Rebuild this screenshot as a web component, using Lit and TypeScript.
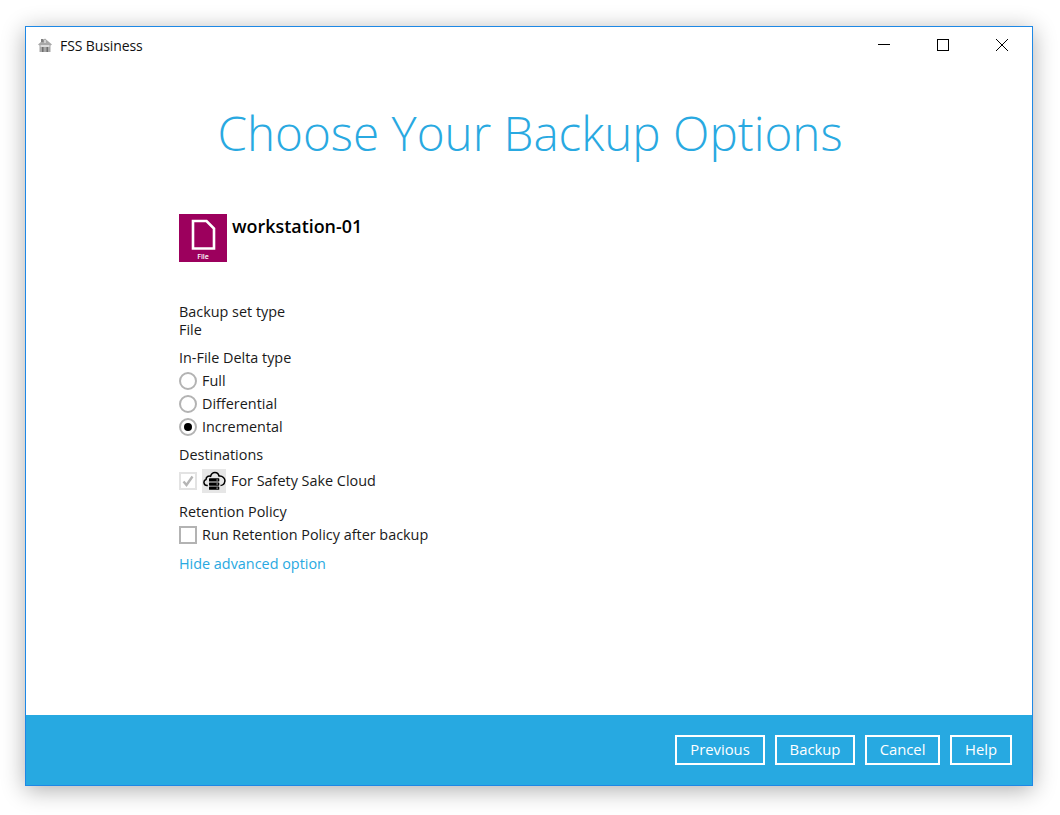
import { LitElement, html, css } from "lit";
import { customElement } from "lit/decorators.js";

@customElement("app-root")
export class AppRoot extends LitElement {
  static styles = css`
    :host { display: block; width: 1060px; height: 815px; background: #fff; font-family: "Open Sans", sans-serif; font-size: 14.4px; color: #1a1a1a; overflow: hidden; }
    .page { box-sizing: border-box; width: 1060px; height: 815px; padding: 26px 27px 29px 25px; }
    .win { box-sizing: border-box; height: 100%; border: 1px solid #1e88e5; background: #fff; display: flex; flex-direction: column; box-shadow: 0 4px 22px rgba(0,0,0,.32); }
    .titlebar { height: 36px; display: flex; align-items: center; padding-left: 11px; padding-right: 1px; flex: none; }
    .appicon { width: 16px; height: 16px; margin-right: 7px; }
    .apptitle { font-size: 14px; color: #111; letter-spacing: -0.1px; }
    .controls { margin-left: auto; display: flex; }
    .ctl { width: 59px; height: 36px; display: flex; align-items: center; justify-content: center; }
    .main { flex: 1; min-height: 0; padding-left: 153px; }
    h1 { margin: 37px 0 0 -151px; font-weight: 300; font-size: 47.6px; line-height: 66px; color: #29a9e1; text-align: center; }
    .head { display: flex; margin-top: 48px; gap: 5px; }
    .tile { width: 48px; height: 48px; background: #9c005d; display: block; }
    .name { font-size: 17.9px; font-weight: 600; line-height: 24px; color: #000; }
    .lbl { line-height: 18px; }
    .type { margin-top: 41px; }
    .sect { margin-top: 10px; }
    .sect.tight { margin-top: 8px; }
    .row { display: flex; align-items: center; height: 23px; gap: 5px; }
    .group { margin-top: 2px; }
    .row.dest { height: 25px; margin-top: 4px; }
    .radio { box-sizing: border-box; width: 18px; height: 18px; border: 2px solid #b3b3b3; border-radius: 50%; display: flex; align-items: center; justify-content: center; }
    .dot { width: 8px; height: 8px; border-radius: 50%; background: #000; }
    .check { box-sizing: border-box; width: 18px; height: 18px; border: 2px solid #b3b3b3; display: flex; align-items: center; justify-content: center; }
    .check.off { border-color: #e3e3e3; }
    .cloud { width: 24px; height: 24px; background: #e6e6e6; display: block; }
    .link { color: #29a9e1; margin-top: 9px; line-height: 18px; }
    .foot { flex: none; height: 70px; background: #27a9e1; display: flex; align-items: center; justify-content: flex-end; gap: 10px; padding-right: 20px; }
    .btn { box-sizing: border-box; height: 30px; border: 2px solid #fff; color: #fff; display: flex; align-items: center; justify-content: center; font-size: 14.8px; line-height: 24px; padding: 0 0 2px; font-family: "Open Sans", sans-serif; background: transparent; }
  `;

  render() {
    return html`<div class="page"><div class="win">
      <div class="titlebar">
        <svg class="appicon" viewBox="0 0 16 16">
          <path d="M8 1.500 L15 7.500 L13.500 8.500 V15 H2.500 V8.500 L1 7.500 Z" fill="#a8a8a8"/>
          <path d="M4 2 h2.500 v3 h-2.500z" fill="#808080"/>
          <path d="M7 3 h2 v3 h-2z" fill="#d0d0d0"/>
          <path d="M3.500 8 h9 v2 h-9z" fill="#dcdcdc"/>
          <path d="M5 10 h1.500 v5 h-1.500z M9.500 10 h1.500 v5 h-1.500z" fill="#6e6e6e"/>
        </svg>
        <span class="apptitle">FSS Business</span>
        <div class="controls">
          <div class="ctl"><svg width="12" height="12" viewBox="0 0 12 12"><path d="M0 5.500H12" stroke="#000" fill="none"/></svg></div>
          <div class="ctl"><svg width="12" height="12" viewBox="0 0 12 12"><rect x=".5" y=".5" width="11" height="11" stroke="#000" fill="none"/></svg></div>
          <div class="ctl"><svg width="12" height="12" viewBox="0 0 12 12"><path d="M0 0L12 12M12 0L0 12" stroke="#000" fill="none"/></svg></div>
        </div>
      </div>
      <div class="main">
        <h1>Choose Your Backup Options</h1>
        <div class="head">
          <svg class="tile" viewBox="0 0 48 48">
            <path d="M14 7 H27.500 L35 14.500 V34.500 H14 Z" fill="none" stroke="#fff" stroke-width="2.600"/>
            <text x="24" y="45" text-anchor="middle" font-size="7" font-weight="600" fill="#fff" font-family="Open Sans, sans-serif">File</text>
          </svg>
          <div class="name">workstation-01</div>
        </div>
        <div class="type lbl">Backup set type</div>
        <div class="lbl">File</div>
        <div class="sect lbl">In-File Delta type</div>
        <div class="group">
          <div class="row"><span class="radio"></span>Full</div>
          <div class="row"><span class="radio"></span>Differential</div>
          <div class="row"><span class="radio"><span class="dot"></span></span>Incremental</div>
        </div>
        <div class="sect tight lbl">Destinations</div>
        <div class="row dest">
          <span class="check off"><svg width="12" height="12" viewBox="0 0 12 12"><path d="M1.500 6.500L4.500 10L10.500 1.500" stroke="#b5b5b5" stroke-width="2.400" fill="none"/></svg></span>
          <svg class="cloud" viewBox="0 0 24 24">
            <path d="M6.500 16.500 H5 C1.500 16.500 .8 11.500 4 10.500 C4 7.500 7 6.500 8.500 7.500 C10 2 16 2.500 17 7 C20.500 6.500 23.500 9.500 22.800 12.500 C22.300 15.500 20 16.500 18 16.500 H17.500" fill="none" stroke="#000" stroke-width="1.500"/>
            <rect x="5.800" y="8.200" width="12.700" height="13.800" fill="#e6e6e6"/>
            <rect x="7" y="9.300" width="10.300" height="3.300" rx=".6" fill="#000"/>
            <rect x="7" y="13.400" width="10.300" height="3.300" rx=".6" fill="#000"/>
            <rect x="7" y="17.500" width="10.300" height="3.300" rx=".6" fill="#000"/>
            <path d="M14.500 11h1.300M14.500 15h1.300M14.500 19.100h1.300" stroke="#e6e6e6"/>
          </svg>
          <span>For Safety Sake Cloud</span>
        </div>
        <div class="sect lbl">Retention Policy</div>
        <div class="group">
          <div class="row"><span class="check"></span>Run Retention Policy after backup</div>
        </div>
        <div class="link">Hide advanced option</div>
      </div>
      <div class="foot">
        <button class="btn" style="width:90px">Previous</button>
        <button class="btn" style="width:80px">Backup</button>
        <button class="btn" style="width:75px">Cancel</button>
        <button class="btn" style="width:62px">Help</button>
      </div>
    </div></div>`;
  }
}
